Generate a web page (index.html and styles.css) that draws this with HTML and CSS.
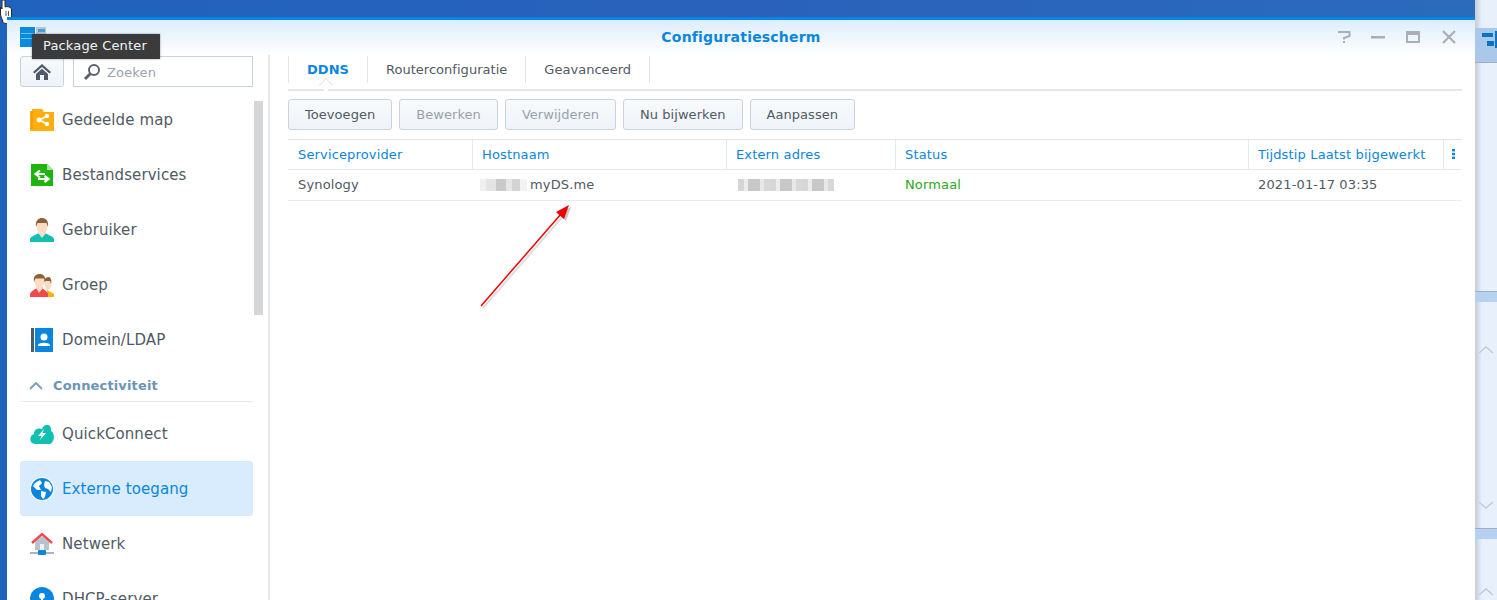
FILE: index.html
```html
<!DOCTYPE html>

<html>

<head>
	<title>Configuratiescherm</title>
	<link rel="stylesheet" href="styles.css">
</head>

<body>
	<div id='desktop'>
		<!-- mouse pointer -->
		<svg class='pointer' width='13' height='24' viewBox='0 0 13 24'>
			<path d='M2 0 H5 V7 C7 6 11 7 11.5 9 V17 L10 22 C8 24 4 24 3 22 L0.5 15 V7 L2 9 Z' fill='#fff' stroke='#2a2a2a' stroke-width='1'/>
			<path d='M6 11 V16 M8.5 11 V16' stroke='#555' stroke-width='1' fill='none'/>
		</svg>

		<div id='sidestrip'>
			<div class='strip-top'>
				<svg width='22' height='24' viewBox='0 0 22 24'><rect x='7' y='5' width='11' height='4' fill='#0b72c4'/><rect x='12' y='13' width='7' height='5' fill='#0b72c4'/><rect x='20' y='3' width='2' height='17' fill='#0b72c4'/></svg>
			</div>
			<div class='strip-band band-one'></div>
			<svg class='chevron' width='16' height='8' viewBox='0 0 16 8'><path d='M1 7 L8 1 L15 7' fill='none' stroke='#c3cad3' stroke-width='1.5'/></svg>
			<svg class='chevron chevron-down' width='16' height='8' viewBox='0 0 16 8'><path d='M1 1 L8 7 L15 1' fill='none' stroke='#c3cad3' stroke-width='1.5'/></svg>
			<div class='strip-band band-two'></div>
			<svg class='chevron chevron-last' width='16' height='8' viewBox='0 0 16 8'><path d='M1 7 L8 1 L15 7' fill='none' stroke='#c3cad3' stroke-width='1.5'/></svg>
		</div>

		<div id='window'>
			<div class='titlebar'>
				<svg class='app-logo' width='26' height='22' viewBox='0 0 26 22'>
					<rect x='0' y='1' width='15' height='20' fill='#0a8be0'/>
					<rect x='1' y='7' width='13' height='1' fill='#6fc4f5'/>
					<rect x='1' y='12' width='13' height='1' fill='#6fc4f5'/>
					<rect x='16' y='1' width='10' height='20' fill='#b7c6d2'/>
					<rect x='18' y='3' width='7' height='3' fill='#4a9ed8'/>
				</svg>
				<div class='title'>Configuratiescherm</div>
				<div class='win-buttons'>
					<svg class='win-help' width='14' height='14' viewBox='0 0 14 14'><path d='M1 2 H12.5 V6 L7 8 V9.5' fill='none' stroke='#a9afb5' stroke-width='2'/><rect x='6' y='11' width='2' height='2' fill='#a9afb5'/></svg>
					<svg width='14' height='14' viewBox='0 0 14 14'><rect x='0' y='6' width='14' height='2.5' fill='#a9afb5'/></svg>
					<svg width='14' height='12' viewBox='0 0 14 12'><path d='M0 0 H14 V12 H0 Z M2 4 V10 H12 V4 Z' fill='#a9afb5' fill-rule='evenodd'/></svg>
					<svg class='win-close' width='14' height='14' viewBox='0 0 14 14'><path d='M1 1 L13 13 M13 1 L1 13' stroke='#a9afb5' stroke-width='2.2' fill='none'/></svg>
				</div>
			</div>

			<div class='main'>
				<div class='sidebar'>
					<div class='search-row'>
						<div class='home-btn'>
							<svg width='18' height='16' viewBox='0 0 18 16'><path d='M9 0 L18 8 L16.5 9.5 L9 3 L1.5 9.5 L0 8 Z M3 10 L9 4.8 L15 10 V16 H11 V11 H7 V16 H3 Z' fill='#4f5a66'/></svg>
						</div>
						<div class='search-box'>
							<svg width='18' height='18' viewBox='0 0 18 18'><circle cx='11' cy='7' r='5' fill='none' stroke='#59636e' stroke-width='2'/><path d='M7.5 10.5 L2 16' stroke='#59636e' stroke-width='3'/></svg>
							<span>Zoeken</span>
						</div>
					</div>

					<div class='menu-wrap'>
						<div class='scrollbar'></div>
						<div class='menu-item'>
							<svg class='icon' width='24' height='22' viewBox='0 0 24 22'><path d='M0 2 H2 V0 H12 L14 3 H24 V22 H0 Z' fill='#ffae0d'/><path d='M2 2 V20' stroke='#e69500' stroke-width='1'/><path d='M17 7 L9.5 11 L17 15' stroke='#fff' stroke-width='1.6' fill='none'/><circle cx='9' cy='11' r='2.4' fill='#fff'/><circle cx='17' cy='7' r='2.2' fill='#fff'/><circle cx='17' cy='15' r='2.2' fill='#fff'/></svg>
							<span>Gedeelde map</span>
						</div>
						<div class='menu-item'>
							<svg class='icon' width='24' height='24' viewBox='0 0 24 24'><path d='M1 1 H17 L23 7 V23 H1 Z' fill='#1fb50e'/><path d='M17 1 L23 7 H17 Z' fill='#a5e59d'/><path d='M15 11 H6 M10 7.5 L5.5 11 L10 14.5' stroke='#fff' stroke-width='2.2' fill='none'/><path d='M8 16 H18 M14.5 13 L18.5 16 L14.5 19' stroke='#fff' stroke-width='2.2' fill='none'/></svg>
							<span>Bestandservices</span>
						</div>
						<div class='menu-item'>
							<svg class='icon' width='24' height='24' viewBox='0 0 24 24'><path d='M0 24 V21 C1 18 6 17 9 15 H15 C18 17 23 18 24 21 V24 Z' fill='#12bfb3'/><path d='M8 15 L12 20 L16 15 L15 11 H9 Z' fill='#fbdcc4'/><ellipse cx='12' cy='8' rx='5.5' ry='7' fill='#fbdcc4'/><path d='M6 9 C5 2 9 0 12 0 C15 0 19 2 18 9 L16.5 5 H7.5 Z' fill='#8f5f36'/></svg>
							<span>Gebruiker</span>
						</div>
						<div class='menu-item'>
							<svg class='icon' width='24' height='24' viewBox='0 0 24 24'><path d='M17 24 V17 L24 21 V24 Z' fill='#ffae0d'/><ellipse cx='18' cy='11' rx='3.5' ry='6' fill='#fbdcc4'/><path d='M14 9 C14 5 17 4 19 4 C21 5 22 8 21 11 L20 8 H16 Z' fill='#8f5f36'/><path d='M0 24 V21 C1 18 4 17 7 15 H12 C14 17 17 18 18 21 V24 Z' fill='#f0484d'/><path d='M6 15 L9 20 L13 15 L13 11 H6 Z' fill='#fbdcc4'/><ellipse cx='9.5' cy='8.5' rx='5' ry='6.5' fill='#fbdcc4'/><path d='M4 9 C3 3 6 1 10 1 C13 1 16 3 15 9 L14 5.5 H5.5 Z' fill='#8f5f36'/></svg>
							<span>Groep</span>
						</div>
						<div class='menu-item'>
							<svg class='icon' width='24' height='24' viewBox='0 0 24 24'><rect x='1' y='0' width='3' height='24' fill='#515b67'/><rect x='5' y='0' width='18' height='24' fill='#0a86e0'/><circle cx='14' cy='9' r='3.5' fill='#fff'/><path d='M8 17 C9 14 19 14 20 17 V18 H8 Z' fill='#fff'/></svg>
							<span>Domein/LDAP</span>
						</div>

						<div class='menu-heading'>
							<svg width='14' height='8' viewBox='0 0 14 8'><path d='M1 7 L7 1 L13 7' fill='none' stroke='#7fa0bb' stroke-width='2'/></svg>
							<span>Connectiviteit</span>
						</div>

						<div class='menu-item'>
							<svg class='icon' width='24' height='22' viewBox='0 0 24 22'><path d='M5 21 C-1 21 -1 12 4 11 C4 5 10 5 12 6 C14 0 22 0 21 8 C26 11 24 21 19 21 Z' fill='#12bfb3'/><path d='M14 6 L8 13 H11.5 L10 17 L16 10 H12.5 Z' fill='#fff'/></svg>
							<span>QuickConnect</span>
						</div>
						<div class='menu-item selected'>
							<svg class='icon' width='24' height='24' viewBox='0 0 24 24'><circle cx='12' cy='12' r='12' fill='#fff'/><circle cx='12' cy='12' r='11' fill='#0a86e0'/><path d='M5 6 L10 3 L12 6 L9 9 L11 13 L7 13 L3 9 Z M11 14 L16 15 L15 20 L13 22 L11 19 Z M15 4 L19 5 L22 10 L21 15 L18 12 L15 11 L14 8 Z' fill='#fff'/></svg>
							<span>Externe toegang</span>
						</div>
						<div class='menu-item'>
							<svg class='icon' width='24' height='24' viewBox='0 0 24 24'><path d='M5 10 L12 4 L19 10 V18 H5 Z' fill='#b7c3cd'/><path d='M2 11 L12 2 L22 11' fill='none' stroke='#f0484d' stroke-width='2.4'/><rect x='10' y='12' width='4' height='6' fill='#eef2f5'/><rect x='0' y='20' width='24' height='2' fill='#aab5bf'/><rect x='8' y='18' width='8' height='5' rx='1' fill='#0a86e0'/></svg>
							<span>Netwerk</span>
						</div>
						<div class='menu-item'>
							<svg class='icon' width='24' height='24' viewBox='0 0 24 24'><circle cx='12' cy='12' r='12' fill='#0a86e0'/><circle cx='12' cy='9' r='3' fill='#fff'/><path d='M12 12 V18 M7 18 H17' stroke='#fff' stroke-width='2'/></svg>
							<span>DHCP-server</span>
						</div>
					</div>
				</div>

				<div class='content'>
					<div class='tabs'>
						<div class='tab active'>DDNS</div>
						<div class='tab'>Routerconfiguratie</div>
						<div class='tab'>Geavanceerd</div>
					</div>

					<div class='toolbar'>
						<div class='btn'>Toevoegen</div>
						<div class='btn disabled'>Bewerken</div>
						<div class='btn disabled'>Verwijderen</div>
						<div class='btn'>Nu bijwerken</div>
						<div class='btn'>Aanpassen</div>
					</div>

					<div class='grid-row grid-head'>
						<div class='cell'>Serviceprovider</div>
						<div class='cell'>Hostnaam</div>
						<div class='cell'>Extern adres</div>
						<div class='cell'>Status</div>
						<div class='cell'>Tijdstip Laatst bijgewerkt</div>
						<div class='cell cell-menu'>
							<svg width='3' height='10' viewBox='0 0 3 10'><rect width='3' height='2.4' fill='#0a86e0'/><rect y='3.8' width='3' height='2.4' fill='#0a86e0'/><rect y='7.6' width='3' height='2.4' fill='#0a86e0'/></svg>
						</div>
					</div>
					<div class='grid-row grid-body'>
						<div class='cell'>Synology</div>
						<div class='cell'><span class='blurred host-blur'></span>myDS.me</div>
						<div class='cell'><span class='blurred ip-blur'></span></div>
						<div class='cell status-ok'>Normaal</div>
						<div class='cell'>2021-01-17 03:35</div>
						<div class='cell cell-menu'></div>
					</div>
				</div>
			</div>
		</div>

		<!-- red annotation arrow drawn over the screenshot -->
		<svg class='arrow' width='110' height='120' viewBox='0 0 110 120'>
			<path d='M11 109 L92 16' stroke='#000' stroke-opacity='.13' stroke-width='2' transform='translate(2 2)'/>
			<path d='M99 8 L94 22 L86 15 Z' fill='#000' fill-opacity='.22' transform='translate(2 2)'/>
			<path d='M11 109 L91 17' stroke='#f00000' stroke-width='1.5'/>
			<path d='M99 8 L94 22 L86 15 Z' fill='#f00000'/>
		</svg>

		<div class='tooltip'>Package Center</div>
	</div>
</body>

</html>
```

FILE: styles.css
```css
body {
	margin: 0;
	overflow: hidden;
	font-family: "DejaVu Sans", sans-serif;
	font-size: 13px;
	letter-spacing: .15px;
	color: #505a64;
}

#desktop {
	position: relative;
	width: 1497px;
	height: 600px;
	overflow: hidden;
	background: linear-gradient(90deg, #1f62bd 0, #2a62bb 50%, #2a6bbb 100%);
}

.pointer {
	position: absolute;
	left: 0;
	top: 0;
}

#window {
	position: absolute;
	left: 7px;
	top: 17px;
	width: 1468px;
	height: 583px;
	display: flex;
	flex-direction: column;
	background-color: white;
	border-top: 3px solid #0686e4;
	box-sizing: border-box;
}

#sidestrip {
	position: absolute;
	left: 1475px;
	top: 0;
	width: 22px;
	height: 600px;
	padding-top: 28px;
	box-sizing: border-box;
	background: linear-gradient(90deg, #c3cbd6 0, #e8f1fb 7px);
}

.strip-top {
	height: 35px;
	background: #a9c8ea;
	border-bottom: 1px solid #a3aebb;
	box-sizing: border-box;
}

.strip-band {
	position: absolute;
	left: 0;
	width: 22px;
	height: 10px;
	background-color: #b6d1f2;
}

.band-one {
	top: 291px;
	border-top: 1px solid #a3aebb;
}

.band-two {
	top: 528px;
	border-top: 1px solid #a3aebb;
}

.chevron {
	position: absolute;
	left: 3px;
	top: 346px;
}

.chevron-down {
	top: 501px;
}

.chevron-last {
	top: 588px;
}

.titlebar {
	height: 35px;
	flex: none;
	display: flex;
	align-items: center;
	position: relative;
	background: linear-gradient(#dcedfb, #ffffff);
}

.app-logo {
	position: absolute;
	left: 13px;
	top: 6px;
}

.title {
	flex: 1;
	text-align: center;
	font-size: 14px;
	font-weight: bold;
	letter-spacing: .2px;
	color: #0a86e0;
	padding-bottom: 2px;
}

.win-buttons {
	position: absolute;
	right: 19px;
	top: 10px;
	display: flex;
	align-items: center;
	gap: 21px;
}

.win-help {
	margin-right: -1px;
}

.win-close {
	margin-left: 1px;
}

.main {
	flex: 1;
	display: flex;
	min-height: 0;
}

.sidebar {
	width: 263px;
	flex: none;
	box-sizing: border-box;
	padding: 1px 0 0 13px;
	border-right: 2px solid #e6e8ea;
	overflow: hidden;
}

.search-row {
	display: flex;
	gap: 9px;
	width: 233px;
	height: 31px;
}

.home-btn {
	width: 44px;
	height: 31px;
	box-sizing: border-box;
	display: flex;
	align-items: center;
	justify-content: center;
	background: linear-gradient(#f7fafc, #eef3f8);
	border: 1px solid #c6d3e1;
	border-radius: 3px;
}

.search-box {
	flex: 1;
	display: flex;
	align-items: center;
	gap: 6px;
	padding: 1px 0 0 9px;
	box-sizing: border-box;
	border: 1px solid #c6d3e1;
	color: #98a2ae;
}

.menu-wrap {
	position: relative;
	margin-top: 5px;
	width: 233px;
}

.scrollbar {
	position: absolute;
	left: 234px;
	top: 9px;
	width: 9px;
	height: 214px;
	background-color: #d4d6d8;
}

.menu-item {
	height: 55px;
	display: flex;
	align-items: center;
	gap: 8px;
	padding-left: 10px;
	font-size: 15px;
	letter-spacing: .1px;
	border-radius: 3px;
}

.icon {
	flex: none;
	width: 24px;
}

.selected {
	background-color: #d8ecfd;
	color: #0a86e0;
}

.menu-heading {
	height: 35px;
	margin-bottom: 4px;
	box-sizing: border-box;
	display: flex;
	align-items: center;
	gap: 10px;
	padding: 3px 0 0 9px;
	font-size: 13px;
	font-weight: bold;
	color: #6b95b5;
	border-bottom: 1px solid #e8eaec;
}

.content {
	flex: 1;
	min-width: 0;
	padding: 0 13px 0 18px;
}

.tabs {
	display: flex;
	height: 33px;
	padding-top: 1px;
	border-bottom: 2px solid #e4e6e8;
	position: relative;
}

.tab {
	padding: 0 18px;
	height: 27px;
	line-height: 27px;
	border-right: 1px solid #dfe4e9;
	font-size: 13px;
	letter-spacing: .03px;
}

.tab.active {
	color: #0a86e0;
	font-weight: bold;
	border-left: 1px solid #dfe4e9;
}

.tab.active::after {
	content: '';
	position: absolute;
	left: 33px;
	top: 25px;
	width: 9px;
	height: 9px;
	background-color: white;
	border-left: 1px solid #e4e6e8;
	border-top: 1px solid #e4e6e8;
	transform: rotate(45deg);
}

.toolbar {
	display: flex;
	gap: 7px;
	margin-top: 8px;
	margin-bottom: 9px;
}

.btn {
	height: 31px;
	box-sizing: border-box;
	line-height: 29px;
	padding: 0 16px;
	background: linear-gradient(#f8fafc, #eff3f8);
	border: 1px solid #c6d3e1;
	border-radius: 3px;
	font-size: 13px;
	letter-spacing: .05px;
}

.btn.disabled {
	color: #98a2ae;
}

.grid-row {
	display: grid;
	grid-template-columns: 185px 254px 169px 353px 195px 1fr;
	box-sizing: border-box;
	border-bottom: 1px solid #e8ebee;
	align-items: center;
}

.grid-head {
	height: 31px;
	border-top: 1px solid #dfe4e9;
	color: #0a86e0;
}

.grid-body {
	height: 31px;
	padding-bottom: 1px;
}

.grid-head .cell {
	border-right: 1px solid #e2eaf2;
	height: 29px;
	line-height: 29px;
}

.grid-head .cell:last-child {
	border-right: none;
}

.cell {
	padding-left: 9px;
	white-space: nowrap;
	overflow: hidden;
}

.cell:first-child {
	padding-left: 10px;
}

.cell-menu {
	padding-left: 8px;
}

.status-ok {
	color: #2ca61a;
}

.blurred {
	display: inline-block;
	height: 12px;
	vertical-align: -2px;
	filter: blur(.6px);
}

.host-blur {
	width: 47px;
	margin-right: 3px;
	margin-left: -2px;
	background: linear-gradient(90deg, #f0f0f0 0 6px, #e4e4e4 6px 16px, #c9c9c9 16px 26px, #e6e6e6 26px 32px, #d4d4d4 32px 40px, #f2f2f2 40px);
}

.ip-blur {
	width: 96px;
	margin-left: 2px;
	background: repeating-linear-gradient(90deg, #d6d6d6 0 6px, #ececec 6px 10px, #c8c8c8 10px 22px, #e8e8e8 22px 26px, #d8d8d8 26px 32px);
}

.arrow {
	position: absolute;
	left: 470px;
	top: 197px;
}

.tooltip {
	position: absolute;
	left: 32px;
	top: 34px;
	width: 128px;
	height: 25px;
	box-sizing: border-box;
	padding-left: 11px;
	line-height: 24px;
	background-color: #3a3b3c;
	color: #f4f4f4;
	font-size: 13px;
	box-shadow: 0 0 2px rgba(0, 0, 0, .4);
}
```
